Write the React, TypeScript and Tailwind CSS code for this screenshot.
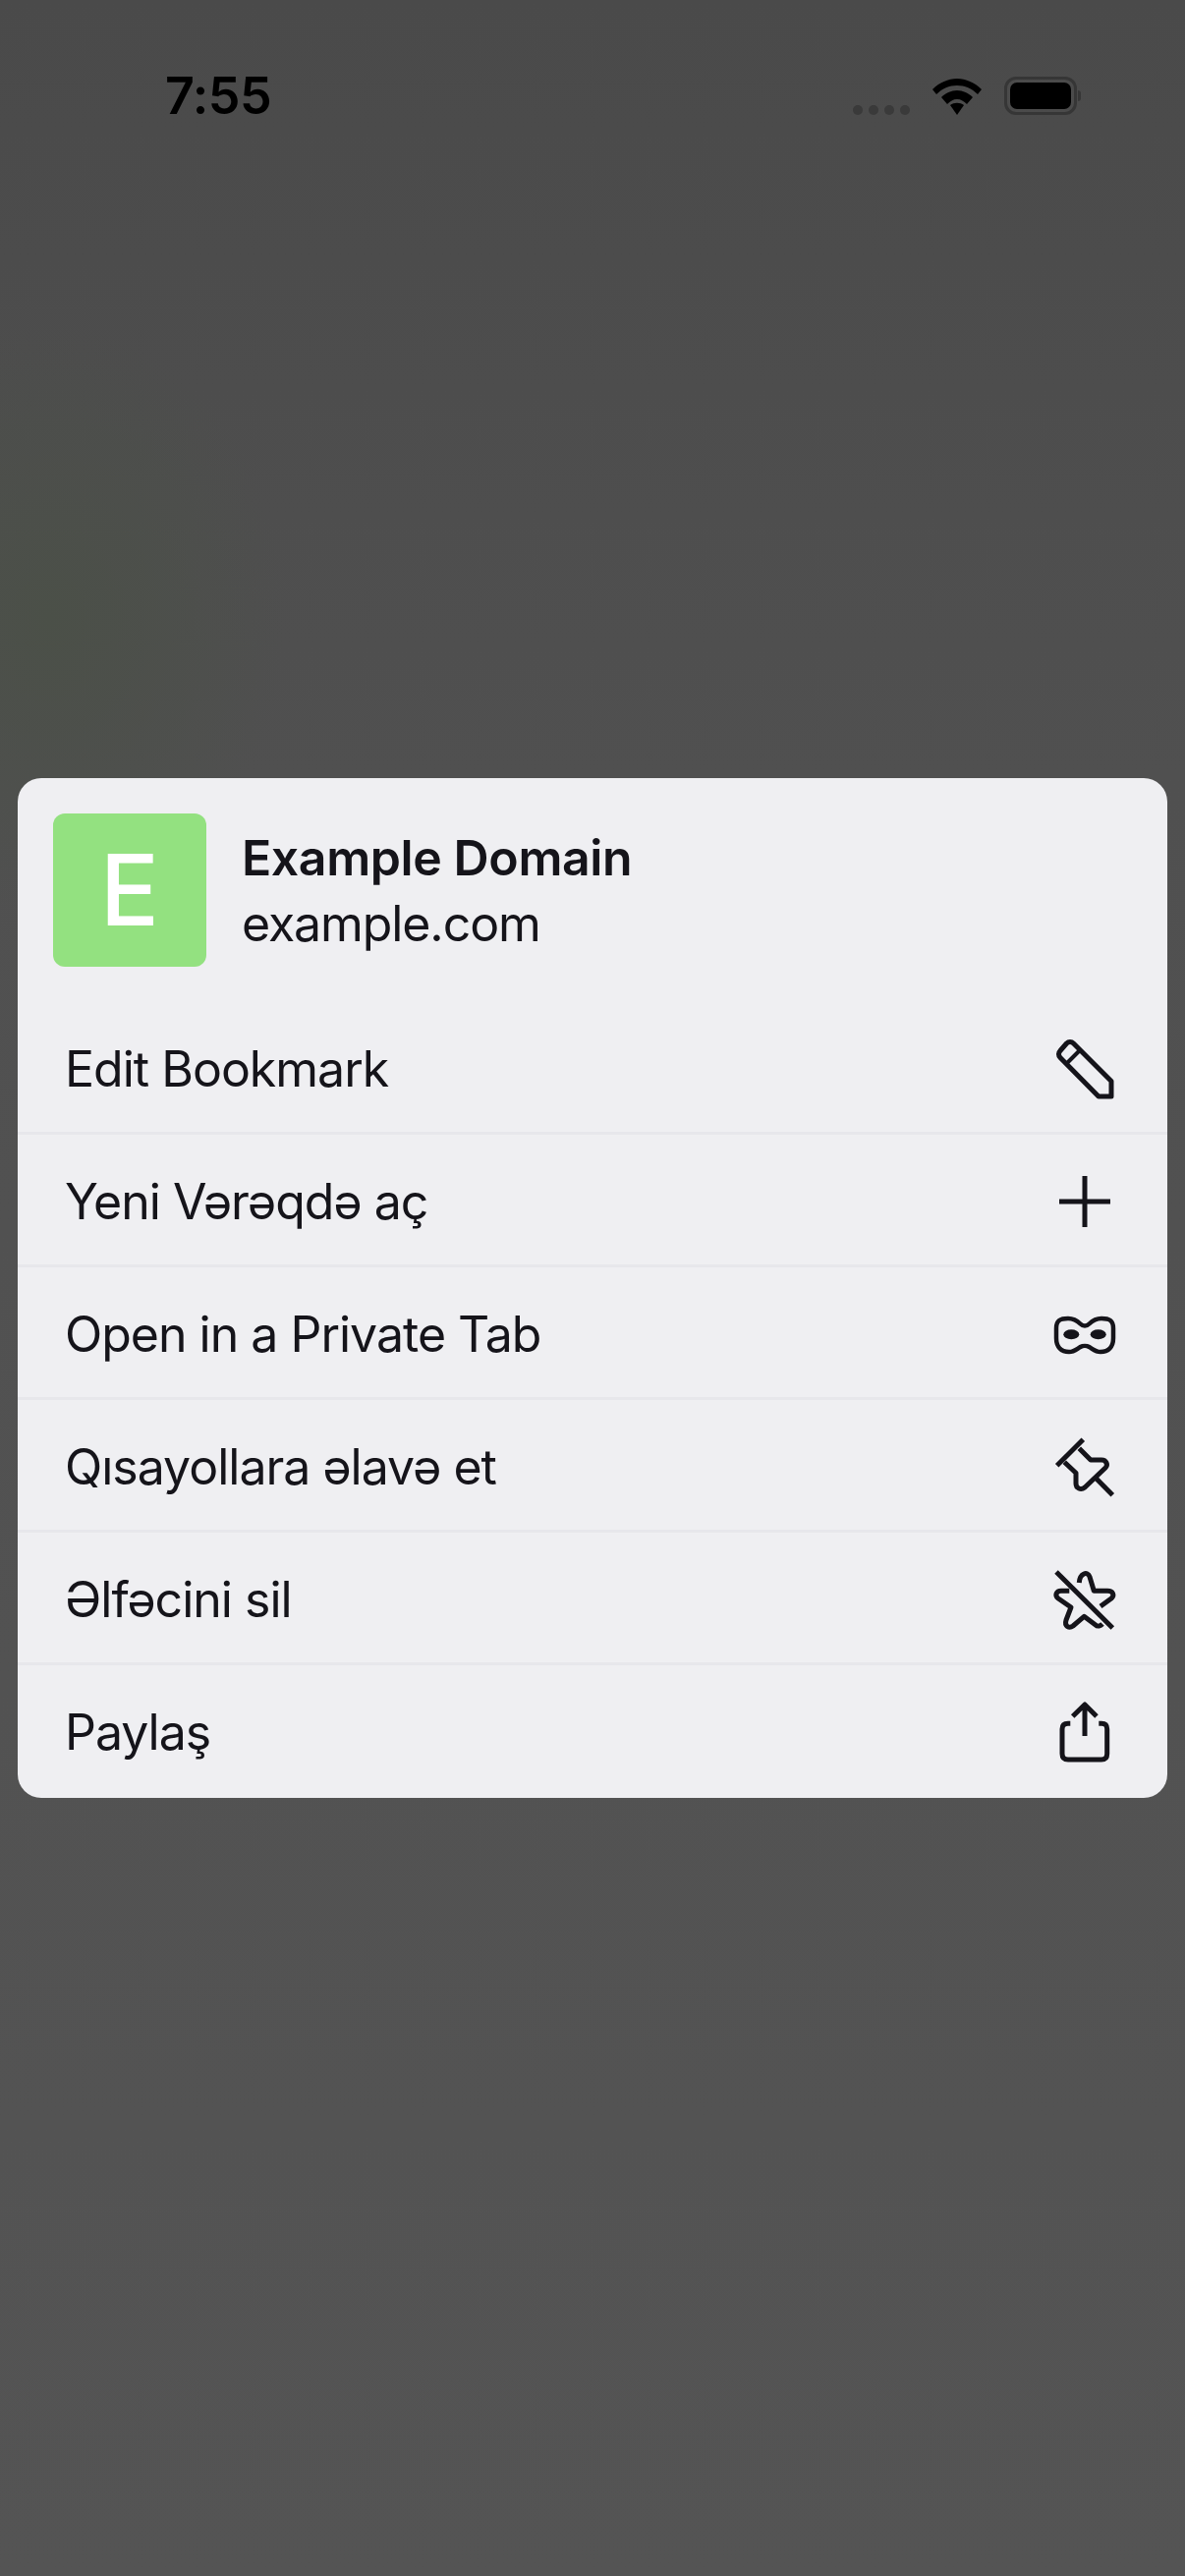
const rows = [
  { label: "Edit Bookmark", icon: <PencilIcon /> },
  { label: "Yeni Vərəqdə aç", icon: <PlusIcon /> },
  { label: "Open in a Private Tab", icon: <MaskIcon /> },
  { label: "Qısayollara əlavə et", icon: <PinIcon /> },
  { label: "Əlfəcini sil", icon: <StarOffIcon /> },
  { label: "Paylaş", icon: <ShareIcon /> },
];

function Glyph({ children }: { children: React.ReactNode }) {
  return (
    <svg width="72" height="72" viewBox="0 0 72 72" fill="none" stroke="#15141a" strokeWidth="5" strokeLinejoin="round">
      {children}
    </svg>
  );
}

function PencilIcon() {
  return (
    <Glyph>
      <path d="M24.5 10L63 48.5V64H50L11 24.5c-2-2-2-5 0-7L17.5 10c2-2 5-2 7 0Z" />
      <path d="M18 30L31.5 16.5" strokeWidth="4" />
    </Glyph>
  );
}

function PlusIcon() {
  return (
    <Glyph>
      <path d="M10 36H62M36 10V62" />
    </Glyph>
  );
}

function MaskIcon() {
  return (
    <Glyph>
      <path
        d="M19 20C25 20 28 22 31.5 25.5C34 28 38 28 40.5 25.5C44 22 47 20 53 20C61 20 65 22 65 30V40C65 49 60 54 52 54C47 54 44 51 40.5 49C38 47.5 34 47.5 31.5 49C28 51 25 54 20 54C12 54 7 49 7 40V30C7 22 11 20 19 20Z"
        strokeWidth="4.5"
      />
      <ellipse cx="22.3" cy="36.3" rx="8" ry="5" fill="#15141a" stroke="none" />
      <ellipse cx="49.7" cy="36.3" rx="8" ry="5" fill="#15141a" stroke="none" />
    </Glyph>
  );
}

function PinIcon() {
  return (
    <Glyph>
      <path d="M7.7 34.7L34.3 8.3" />
      <path d="M30.3 17.3L42 29H53C58 29 60 34 57 37L36 57C32 60 27 58 27 53V42.3L15.3 31.3" />
      <path d="M47 47.3L64.3 64.7" />
    </Glyph>
  );
}

function StarOffIcon() {
  return (
    <Glyph>
      <path d="M7 8L64.3 65" />
      <path d="M30.3 19C31 9 39 7 41 13L45.3 27.3H59C65 27.3 66.5 32 63 35L52 43" />
      <path d="M20.3 27.3H12C7 27.3 5 32 9 35L22 44L17 57C15 63 20 66 24 63L35.3 53.3L47 62C49 64 52 63 54 61" />
    </Glyph>
  );
}

function ShareIcon() {
  return (
    <Glyph>
      <path d="M36 40V9M23.7 20L36 8L48 20" />
      <path d="M21.3 27.3H19C15 27.3 13 29 13 33V58C13 62 15 64 19 64H53C57 64 58.7 62 58.7 58V33C58.7 29 57 27.3 53 27.3H50.3" />
    </Glyph>
  );
}

export default function App() {
  return (
    <div className="w-[1206px] h-[2622px] flex flex-col bg-[radial-gradient(ellipse_240px_300px_at_50px_630px,#4b5048,transparent),linear-gradient(to_bottom,#4a4a4a,#505050_30%,#545454)] font-['Inter',sans-serif] text-[#15141a]">
      <div className="h-[792px] shrink-0 flex items-start justify-between pt-[71px] pl-[168px] pr-[106px]">
        <span className="text-[52px] leading-[54px] font-semibold text-black tracking-[-0.5px]">7:55</span>
        <div className="flex items-end h-[46px] pt-[6px]">
          <div className="flex gap-[6px] mr-[23px]">
            <span className="w-[10px] h-[10px] rounded-full bg-[#3a3a3a]" />
            <span className="w-[10px] h-[10px] rounded-full bg-[#3a3a3a]" />
            <span className="w-[10px] h-[10px] rounded-full bg-[#3a3a3a]" />
            <span className="w-[10px] h-[10px] rounded-full bg-[#3a3a3a]" />
          </div>
          <svg width="50" height="37" viewBox="0 0 50 37" className="mr-[23px]">
            <path d="M25 37L18 27C22 24 28 24 32 27Z" fill="#000" />
            <path d="M25 12C31 12 37 15 41 19L35 26C32 23 29 21 25 21C21 21 18 23 15 26L9 19C13 15 19 12 25 12Z" fill="#000" />
            <path d="M25 0C34 0 43 4 50 11L46 16C40 10 33 7 25 7C17 7 10 10 4 16L0 11C7 4 16 0 25 0Z" fill="#000" />
          </svg>
          <div className="flex items-center">
            <div className="w-[74px] h-[39px] rounded-[12px] border-[3px] border-[#363636] p-[3px]">
              <div className="w-full h-full rounded-[7px] bg-black" />
            </div>
            <span className="w-[3px] h-[11px] rounded-r-full bg-[#363636] ml-[1px]" />
          </div>
        </div>
      </div>

      <div className="mx-[18px] h-[1038px] rounded-[24px] bg-[#efeff2] flex flex-col overflow-hidden">
        <div className="h-[228px] shrink-0 flex items-start pt-[36px] pl-[36px]">
          <div className="w-[156px] h-[156px] rounded-[12px] bg-[#93e180] flex items-center justify-center text-white text-[100px] leading-none font-medium">E</div>
          <div className="ml-[36px] pt-[13px] flex flex-col">
            <span className="text-[50px] leading-[64px] font-semibold tracking-[-0.4px]">Example Domain</span>
            <span className="text-[50px] leading-[70px] font-normal tracking-[-1.1px]">example.com</span>
          </div>
        </div>
        {rows.map((row, i) => (
          <div
            key={row.label}
            className={`h-[135px] shrink-0 flex items-center justify-between pt-[4px] pl-[48px] pr-[48px] border-b-[3px] ${i < rows.length - 1 ? "border-[#e7e7eb]" : "border-transparent"}`}
          >
            <span className="text-[50px] font-normal leading-none tracking-[-1px]">{row.label}</span>
            {row.icon}
          </div>
        ))}
      </div>
    </div>
  );
}
